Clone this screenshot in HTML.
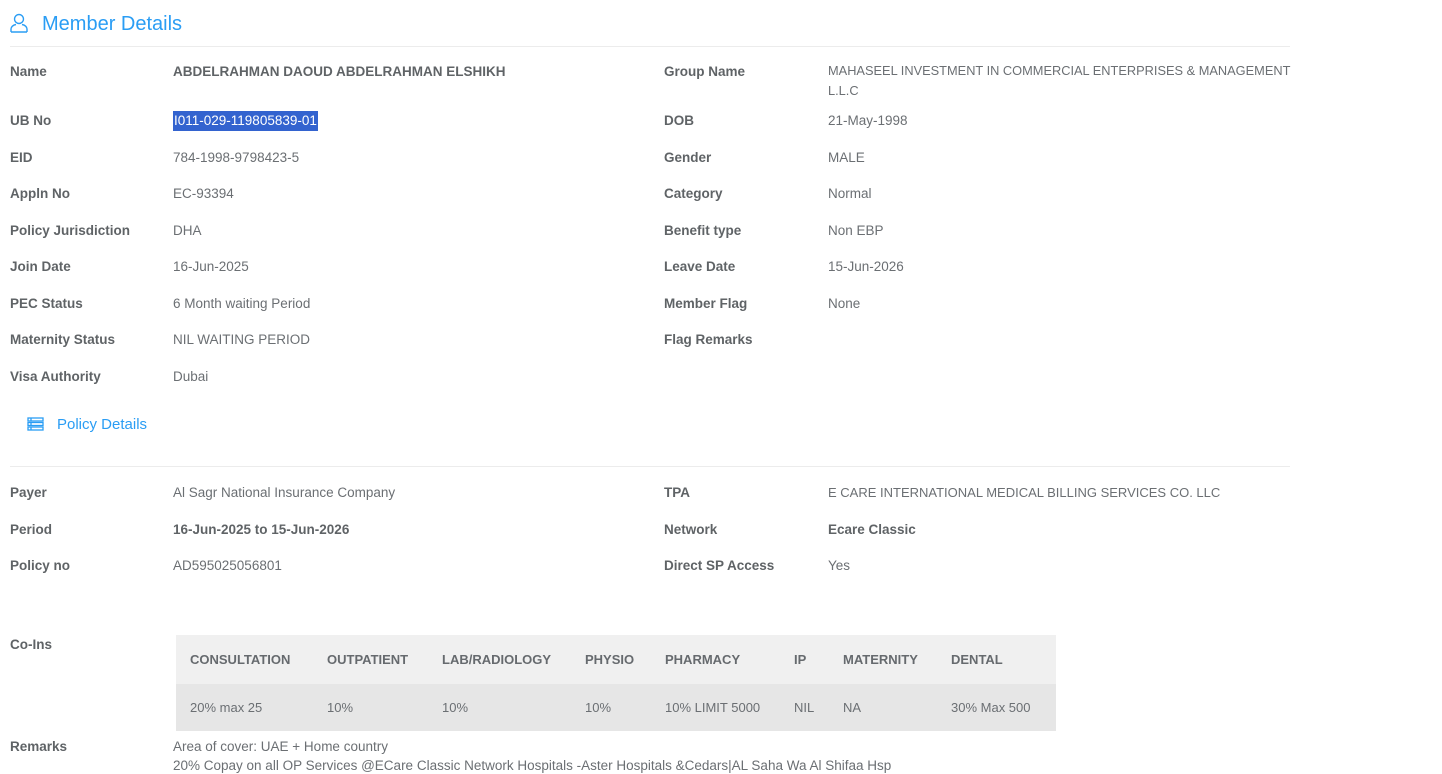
<!DOCTYPE html>
<html><head><style>
body{margin:0;background:#fff;font-family:"Liberation Sans",sans-serif;font-size:13.5px;color:#6b6f73;width:1442px;height:772px;overflow:hidden;position:relative}
.a{position:absolute;white-space:nowrap;line-height:16px}
.l{font-weight:bold;color:#5f6366}
.b{font-weight:bold;color:#5f6366}
.h{color:#2a9df4;font-size:18px}
.hr{position:absolute;left:10px;width:1280px;height:1px;background:#ececec}
.th{position:absolute;font-weight:bold;color:#666a6e;font-size:13px;top:652px}
.td{position:absolute;color:#6b6f73;font-size:13px;top:700px}
</style></head><body>
<svg class="a" style="left:9px;top:13px" width="20" height="20" viewBox="0 0 20 20" fill="none" stroke="#2a9df4" stroke-width="1.4"><circle cx="10" cy="6" r="4.5"/><path d="M2 19v-3c0-2 2-4 5-4.5M18 19v-3c0-2-2-4-5-4.5M2 19h16"/></svg>
<div class="a h" style="left:42px;top:14px;font-size:20px;line-height:20px">Member Details</div>
<div class="hr" style="top:46px"></div>

<div class="a l" style="left:10px;top:64px">Name</div><div class="a b" style="left:173px;top:64px">ABDELRAHMAN DAOUD ABDELRAHMAN ELSHIKH</div>
<div class="a l" style="left:664px;top:64px">Group Name</div><div class="a" style="left:828px;line-height:20px;top:61px;font-size:12.8px">MAHASEEL INVESTMENT IN COMMERCIAL ENTERPRISES &amp; MANAGEMENT<br>L.L.C</div>

<div class="a l" style="left:10px;top:113px">UB No</div><div class="a" style="left:173px;top:111px;background:#3363cf;color:#fff;padding:1px 1px;height:18px;line-height:18px">I011-029-119805839-01</div>
<div class="a l" style="left:664px;top:113px">DOB</div><div class="a" style="left:828px;top:113px">21-May-1998</div>

<div class="a l" style="left:10px;top:150px">EID</div><div class="a" style="left:173px;top:150px">784-1998-9798423-5</div>
<div class="a l" style="left:664px;top:150px">Gender</div><div class="a" style="left:828px;top:150px">MALE</div>

<div class="a l" style="left:10px;top:186px">Appln No</div><div class="a" style="left:173px;top:186px">EC-93394</div>
<div class="a l" style="left:664px;top:186px">Category</div><div class="a" style="left:828px;top:186px">Normal</div>

<div class="a l" style="left:10px;top:223px">Policy Jurisdiction</div><div class="a" style="left:173px;top:223px">DHA</div>
<div class="a l" style="left:664px;top:223px">Benefit type</div><div class="a" style="left:828px;top:223px">Non EBP</div>

<div class="a l" style="left:10px;top:259px">Join Date</div><div class="a" style="left:173px;top:259px">16-Jun-2025</div>
<div class="a l" style="left:664px;top:259px">Leave Date</div><div class="a" style="left:828px;top:259px">15-Jun-2026</div>

<div class="a l" style="left:10px;top:296px">PEC Status</div><div class="a" style="left:173px;top:296px">6 Month waiting Period</div>
<div class="a l" style="left:664px;top:296px">Member Flag</div><div class="a" style="left:828px;top:296px">None</div>

<div class="a l" style="left:10px;top:332px">Maternity Status</div><div class="a" style="left:173px;top:332px">NIL WAITING PERIOD</div>
<div class="a l" style="left:664px;top:332px">Flag Remarks</div>

<div class="a l" style="left:10px;top:369px">Visa Authority</div><div class="a" style="left:173px;top:369px">Dubai</div>

<svg class="a" style="left:27px;top:417px" width="17" height="14" viewBox="0 0 17 14" fill="none" stroke="#2a9df4" stroke-width="1.3"><rect x="1" y="1" width="15" height="3"/><rect x="1" y="5.5" width="15" height="3"/><rect x="1" y="10" width="15" height="3"/><path d="M4 1v3M4 5.5v3M4 10v3"/></svg>
<div class="a h" style="left:57px;top:417px;font-size:15px">Policy Details</div>
<div class="hr" style="top:466px"></div>

<div class="a l" style="left:10px;top:485px">Payer</div><div class="a" style="left:173px;top:485px">Al Sagr National Insurance Company</div>
<div class="a l" style="left:664px;top:485px">TPA</div><div class="a" style="left:828px;top:485px;font-size:13px">E CARE INTERNATIONAL MEDICAL BILLING SERVICES CO. LLC</div>

<div class="a l" style="left:10px;top:522px">Period</div><div class="a b" style="left:173px;top:522px">16-Jun-2025 to 15-Jun-2026</div>
<div class="a l" style="left:664px;top:522px">Network</div><div class="a b" style="left:828px;top:522px">Ecare Classic</div>

<div class="a l" style="left:10px;top:558px">Policy no</div><div class="a" style="left:173px;top:558px">AD595025056801</div>
<div class="a l" style="left:664px;top:558px">Direct SP Access</div><div class="a" style="left:828px;top:558px">Yes</div>

<div class="a l" style="left:10px;top:637px">Co-Ins</div>
<div style="position:absolute;left:176px;top:635px;width:880px;height:49px;background:#f0f0f0"></div>
<div style="position:absolute;left:176px;top:684px;width:880px;height:47px;background:#e6e6e6"></div>
<div class="a th" style="left:190px">CONSULTATION</div><div class="a th" style="left:327px">OUTPATIENT</div><div class="a th" style="left:442px">LAB/RADIOLOGY</div><div class="a th" style="left:585px">PHYSIO</div><div class="a th" style="left:665px">PHARMACY</div><div class="a th" style="left:794px">IP</div><div class="a th" style="left:843px">MATERNITY</div><div class="a th" style="left:951px">DENTAL</div>
<div class="a td" style="left:190px">20% max 25</div><div class="a td" style="left:327px">10%</div><div class="a td" style="left:442px">10%</div><div class="a td" style="left:585px">10%</div><div class="a td" style="left:665px">10% LIMIT 5000</div><div class="a td" style="left:794px">NIL</div><div class="a td" style="left:843px">NA</div><div class="a td" style="left:951px">30% Max 500</div>

<div class="a l" style="left:10px;top:739px">Remarks</div>
<div class="a" style="left:173px;top:739px">Area of cover: UAE + Home country</div>
<div class="a" style="left:173px;top:758px">20% Copay on all OP Services @ECare Classic Network Hospitals -Aster Hospitals &amp;Cedars|AL Saha Wa Al Shifaa Hsp</div>
</body></html>
